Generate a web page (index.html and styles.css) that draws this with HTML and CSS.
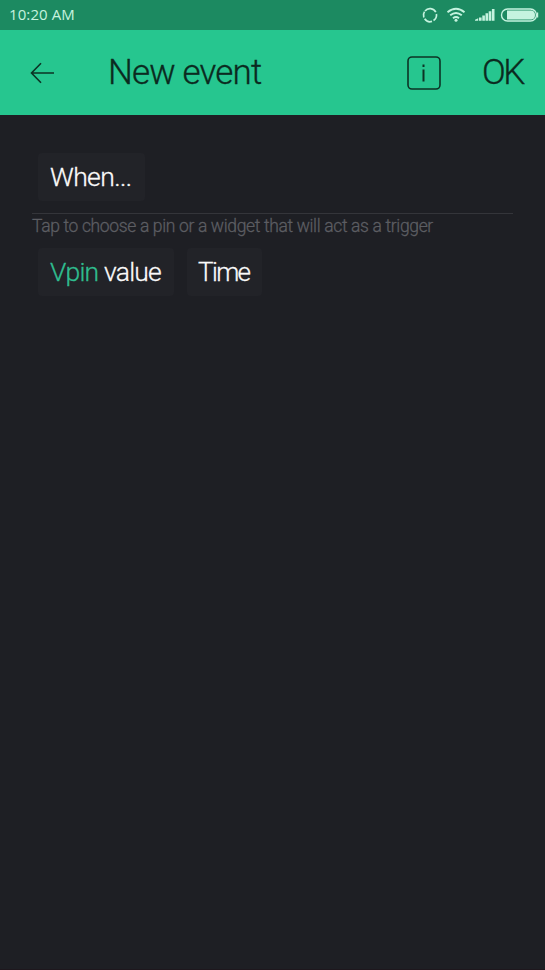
FILE: index.html
```html
<!DOCTYPE html>
<html lang="en">
<head>
<meta charset="utf-8">
<title>New event</title>
<link rel="stylesheet" href="styles.css">
</head>
<body>
<div class="status">
  <span class="clock">10:20 AM</span>
  <svg class="indicators" width="122" height="18" viewBox="0 0 122 18">
    <g fill="none" stroke="#c5f3df" stroke-width="1.700">
      <path d="M4 5A6.500 6.500 0 0 1 14.800 6.200M15.400 8A6.500 6.500 0 0 1 12.500 14.500M11 15.400A6.500 6.500 0 0 1 3.700 12.800M2.800 11.500A6.500 6.500 0 0 1 3.500 5.600"/>
      <path d="M26.500 6.200Q35-.8 43.500 6.200M29.200 9.300Q35 4.500 40.800 9.300M32 12.200Q35 9.800 38 12.200" stroke-width="1.900"/>
      <rect x="80.500" y="3" width="35" height="12" rx="6" stroke-width="1.400"/>
    </g>
    <g fill="#c5f3df">
      <circle cx="35" cy="14.200" r="1.500"/>
      <path d="M54 14.800v-1l3.200-1.500v2.500zM58 11.500h2.600v3.300H58zM61.300 9.500h2.600v5.300h-2.600zM64.500 7.300h2.600v7.500h-2.600zM67.700 5.200h2.600v9.600h-2.600zM70.900 3h2.600v11.800h-2.600z"/>
      <path d="M86 4.500h24.500q3.500.5 3.500 4.500t-3.500 4.500H86z"/>
      <path d="M116 6.500h1.200v5H116z"/>
    </g>
  </svg>
</div>
<header class="bar">
  <svg class="back" width="26" height="22" viewBox="0 0 26 22" fill="none" stroke="#0c3325" stroke-width="1.600"><path d="M25 11H2.500M12 1.200L2.500 11l9.500 9.800"/></svg>
  <h1 class="title">New event</h1>
  <svg class="info" width="34" height="34" viewBox="0 0 34 34" fill="none" stroke="#0c3325"><rect x="1" y="1" width="32" height="32" rx="4" stroke-width="1.600"/><path d="M16.500 13.500v12M16.500 8.500v2.500" stroke-width="2"/></svg>
  <span class="ok">OK</span>
</header>
<main class="content">
  <div class="row"><span class="chip when">When...</span></div>
  <p class="hint">Tap to choose a pin or a widget that will act as a trigger</p>
  <div class="row options">
    <span class="chip value"><span class="pin">Vpin</span> value</span>
    <span class="chip time">Time</span>
  </div>
</main>
</body>
</html>
```
FILE: styles.css
```css
* { box-sizing: border-box; }
body {
  margin: 0;
  height: 970px;
  display: flex;
  flex-direction: column;
  overflow: hidden;
  background: #1e1f24;
  border-bottom: 1px solid #1e171d;
  font-family: Roboto, "Liberation Sans", sans-serif;
  font-weight: 300;
  white-space: nowrap;
  -webkit-text-stroke: 0.3px currentColor;
}
.status {
  height: 30px;
  flex: none;
  display: flex;
  justify-content: space-between;
  padding: 6px 2px 0 9px;
  background: #1c8a61;
  color: #c5f3df;
}
.clock {
  font: 400 15px/16px "Open Sans", sans-serif;
  letter-spacing: 0.1px;
  -webkit-text-stroke: 0;
}
.bar {
  height: 85px;
  flex: none;
  display: flex;
  align-items: center;
  padding: 0 20px 0 29px;
  background: #26c68f;
  color: #0b2a20;
}
.title {
  flex: 1;
  margin: 0 0 0 53px;
  font-size: 35px;
  line-height: 42px;
  font-weight: 300;
  letter-spacing: -0.85px;
}
.info { flex: none; }
.ok {
  width: 43px;
  margin-left: 41px;
  font-size: 35px;
  line-height: 42px;
  letter-spacing: -2.5px;
}
.content { padding: 38px 32px 0; }
.row { display: flex; gap: 13px; padding-left: 6px; }
.chip {
  height: 48px;
  padding-left: 12px;
  border-radius: 4px;
  background: #222328;
  color: #fafafa;
  font-size: 26.5px;
  line-height: 48px;
  letter-spacing: -0.8px;
}
.when { width: 107px; letter-spacing: -0.6px; }
.value { width: 136px; }
.time { width: 75px; padding-left: 11px; font-size: 26px; letter-spacing: -1.6px; }
.pin { color: #2fbd8f; }
.hint {
  margin: 12px 0 0;
  height: 34px;
  border-top: 1px solid #34353a;
  color: #5c5d62;
  font-size: 17.5px;
  line-height: 24px;
  letter-spacing: -0.35px;
}
.options { margin-top: 1px; }
```
